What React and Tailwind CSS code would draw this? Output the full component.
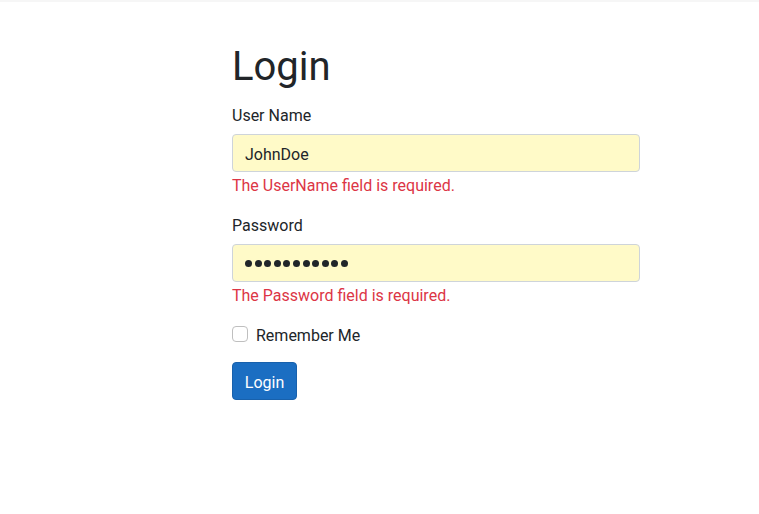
import React from "react";

const font = { fontFamily: "Roboto, 'Liberation Sans', sans-serif" };

export default function App() {
  return (
    <div className="min-h-[514px] bg-white text-[#212529]" style={font}>
      <div className="h-[2px] bg-[#f6f6f6]" />

      <div className="ml-[232px] w-[408px] pt-[41px]">
        <h1 className="text-[40px] leading-[48px] font-normal">Login</h1>

        {/* User name */}
        <div className="mt-[11px] mb-[14px]">
          <label className="block text-[16px] leading-[24px] pt-[2px] mb-[6px]">User Name</label>
          <div className="h-[38px] flex items-center px-[12px] pt-[4px] bg-[#fffac8] border border-[#ced4da] rounded-[4px] text-[16px]">
            JohnDoe
          </div>
          <div className="text-[16px] leading-[24px] pt-[2px] text-[#dc3545]">The UserName field is required.</div>
        </div>

        {/* Password */}
        <div className="mb-[14px]">
          <label className="block text-[16px] leading-[24px] pt-[2px] mb-[6px]">Password</label>
          <div className="h-[38px] flex items-center px-[12px] bg-[#fffac8] border border-[#ced4da] rounded-[4px]">
            <div className="flex gap-[2.6px]">
              {Array.from({ length: 11 }).map((_, i) => (
                <span key={i} className="block w-[7px] h-[7px] rounded-full bg-[#212529]" />
              ))}
            </div>
          </div>
          <div className="text-[16px] leading-[24px] pt-[2px] text-[#dc3545]">The Password field is required.</div>
        </div>

        {/* Remember me */}
        <div className="flex items-start gap-[8px] mb-[14px]">
          <span className="block mt-[4px] w-[16px] h-[16px] border border-[#bfbfbf] rounded-[4px] bg-white" />
          <span className="text-[16px] leading-[24px] pt-[2px]">Remember Me</span>
        </div>

        <button className="h-[38px] w-[65px] pt-[4px] bg-[#1b6ec2] border border-[#1861ac] rounded-[4px] text-white text-[16px]">
          Login
        </button>
      </div>
    </div>
  );
}
